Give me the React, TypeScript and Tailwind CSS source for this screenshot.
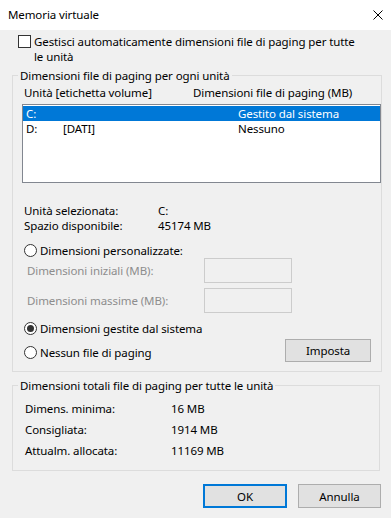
import React from 'react';

function Radio({ checked }: { checked?: boolean }) {
  return (
    <span className="flex h-[13px] w-[13px] shrink-0 items-center justify-center rounded-full border border-[#333333] bg-white">
      {checked && <span className="h-[7px] w-[7px] rounded-full bg-[#333333]" />}
    </span>
  );
}

function DisabledInput() {
  return <div className="h-[25px] w-[88px] border border-[#cccccc] bg-[#f0f0f0]" />;
}

export default function App() {
  const totals = [
    ['Dimens. minima:', '16 MB'],
    ['Consigliata:', '1914 MB'],
    ['Attualm. allocata:', '11169 MB'],
  ];

  return (
    <div
      className="flex h-[518px] w-[391px] flex-col overflow-hidden bg-[#f0f0f0] text-[11.5px] leading-[15px] tracking-[-0.1px] text-black"
      style={{ fontFamily: '"Noto Sans", "Segoe UI", Arial, sans-serif' }}
    >
      {/* title bar */}
      <div className="flex h-[30px] shrink-0 items-center justify-between bg-white pl-[8px] pr-[8px]">
        <span className="pb-[2px]">Memoria virtuale</span>
        <svg width="10" height="10" viewBox="0 0 10 10">
          <path d="M0.5 0.5 L9.5 9.5 M9.5 0.5 L0.5 9.5" stroke="#000" strokeWidth="1" />
        </svg>
      </div>

      {/* auto checkbox */}
      <div className="ml-[18px] mt-[4px] flex">
        <span className="mt-[1px] h-[13px] w-[13px] shrink-0 border border-[#333333] bg-white" />
        <span className="ml-[3px]">
          Gestisci automaticamente dimensioni file di paging per tutte
          <br />
          le unità
        </span>
      </div>

      {/* per-drive group */}
      <fieldset className="ml-[12px] mt-[4px] w-[368px] border border-[#dcdcdc] pb-[9px]">
        <legend className="ml-[5px] px-[2px]">Dimensioni file di paging per ogni unità</legend>

        <div className="ml-[11px] mt-[2px] flex">
          <span className="w-[169px]">Unità [etichetta volume]</span>
          <span>Dimensioni file di paging (MB)</span>
        </div>

        <div className="ml-[9px] mt-[4px] h-[79px] w-[359px] border border-[#828790] bg-white pt-[1px]">
          <div className="flex h-[15px] bg-[#0078d7] pl-[3px] text-white">
            <span className="w-[37px]">C:</span>
            <span className="w-[175px]"></span>
            <span>Gestito dal sistema</span>
          </div>
          <div className="flex h-[15px] pl-[3px]">
            <span className="w-[37px]">D:</span>
            <span className="w-[175px]">[DATI]</span>
            <span>Nessuno</span>
          </div>
        </div>

        <div className="ml-[11px] mt-[20px] flex">
          <span className="w-[134px]">Unità selezionata:</span>
          <span>C:</span>
        </div>
        <div className="ml-[11px] flex">
          <span className="w-[134px]">Spazio disponibile:</span>
          <span>45174 MB</span>
        </div>

        <div className="ml-[11px] mt-[10px] flex h-[15px] items-center">
          <Radio />
          <span className="ml-[3px]">Dimensioni personalizzate:</span>
        </div>

        <div className="ml-[14px] flex items-center text-[#8d8d8d]">
          <span className="w-[177px]">Dimensioni iniziali (MB):</span>
          <DisabledInput />
        </div>
        <div className="ml-[14px] mt-[5px] flex items-center text-[#8d8d8d]">
          <span className="w-[177px]">Dimensioni massime (MB):</span>
          <DisabledInput />
        </div>

        <div className="ml-[11px] mt-[8px] flex h-[15px] items-center">
          <Radio checked />
          <span className="ml-[3px]">Dimensioni gestite dal sistema</span>
        </div>

        <div className="ml-[11px] mt-[3px] flex h-[23px] items-center">
          <div className="mt-[3px] flex w-[261px] items-center">
            <Radio />
            <span className="ml-[3px]">Nessun file di paging</span>
          </div>
          <button className="flex h-[23px] w-[86px] items-center justify-center border border-[#adadad] bg-[#e1e1e1]">
            Imposta
          </button>
        </div>
      </fieldset>

      {/* totals group */}
      <fieldset className="ml-[12px] mt-[6px] w-[368px] border border-[#dcdcdc] pb-[9px]">
        <legend className="ml-[5px] px-[2px]">Dimensioni totali file di paging per tutte le unità</legend>
        <div className="mt-[5px]">
          {totals.map(([label, value]) => (
            <div key={label} className="ml-[12px] flex leading-[21px]">
              <span className="w-[146px]">{label}</span>
              <span>{value}</span>
            </div>
          ))}
        </div>
      </fieldset>

      {/* dialog buttons */}
      <div className="ml-[203px] mt-[13px] flex gap-[11px]">
        <button className="flex h-[24px] w-[84px] items-center justify-center border-2 border-[#0078d7] bg-[#e1e1e1]">
          OK
        </button>
        <button className="flex h-[24px] w-[83px] items-center justify-center border border-[#adadad] bg-[#e1e1e1]">
          Annulla
        </button>
      </div>
    </div>
  );
}
